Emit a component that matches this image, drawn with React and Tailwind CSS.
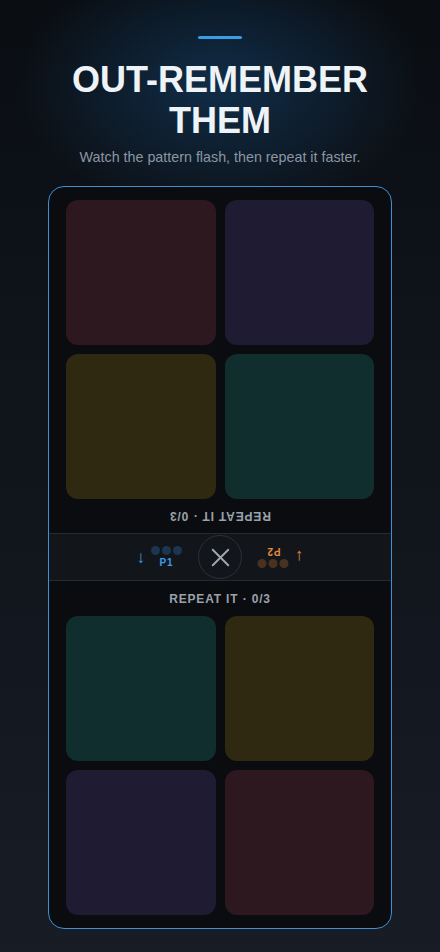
import React from 'react';
import { X } from 'lucide-react';

const TOP_PADS = ['bg-[#2e1820]', 'bg-[#1f1b33]', 'bg-[#2e2910]', 'bg-[#0f2e2d]'];
const BOTTOM_PADS = ['bg-[#0f2e2d]', 'bg-[#2e2910]', 'bg-[#1f1b33]', 'bg-[#2e1820]'];

function PadGrid({ pads }) {
  return (
    <div className="grid grid-cols-2 gap-[9px]">
      {pads.map((c, i) => (
        <div key={i} className={`h-[145px] rounded-[12px] ${c}`} />
      ))}
    </div>
  );
}

function Status({ flipped }) {
  return (
    <div
      className={`flex items-center justify-center text-[12px] font-bold tracking-[0.07em] text-[#9aa2ac] ${
        flipped ? 'h-[34px] rotate-180' : 'h-[35px]'
      }`}
    >
      REPEAT IT · 0/3
    </div>
  );
}

// one player's score block; the other side is the same thing turned over
function Player({ label, arrow, dot, flipped }) {
  return (
    <div className={`flex items-center gap-[6px] ${flipped ? 'rotate-180' : ''}`}>
      <span className={`text-[17px] font-bold leading-none ${arrow}`}>↓</span>
      <div className="flex flex-col items-center gap-[3px]">
        <div className="flex gap-[2px]">
          <span className={`w-[9px] h-[9px] rounded-full ${dot}`} />
          <span className={`w-[9px] h-[9px] rounded-full ${dot}`} />
          <span className={`w-[9px] h-[9px] rounded-full ${dot}`} />
        </div>
        <span className={`text-[10px] font-bold tracking-[0.08em] leading-none ${arrow}`}>{label}</span>
      </div>
    </div>
  );
}

export default function App() {
  return (
    <div
      className="min-h-[952px] w-[440px] flex flex-col items-center bg-[radial-gradient(ellipse_200px_130px_at_50%_85px,rgba(20,70,115,0.55),transparent),linear-gradient(180deg,#0a0e13_0%,#10151c_45%,#171c25_100%)]"
      style={{ fontFamily: '"Liberation Sans", Arial, sans-serif' }}
    >
      <div className="mt-9 w-11 h-[3px] rounded-full bg-[#3a9be6]" />
      <h1 className="mt-[20px] text-center text-[36px] leading-[41px] font-bold text-[#eef3f8]">
        OUT-REMEMBER
        <br />
        THEM
      </h1>
      <p className="mt-[6px] text-[14.3px] leading-[20px] text-[#8c96a3]">
        Watch the pattern flash, then repeat it faster.
      </p>

      <div className="mt-[19px] w-[344px] rounded-[16px] border border-[#3f8fd2] bg-[#0a0c10] overflow-hidden flex flex-col">
        <div className="px-[17px] pt-[13px]">
          <PadGrid pads={TOP_PADS} />
        </div>
        <Status flipped />

        <div className="h-[48px] flex items-center justify-center gap-[16px] bg-[#12161b] border-y border-[#262b33]">
          <Player label="P1" arrow="text-[#3a9be6]" dot="bg-[#1c3552]" />
          <button className="w-[44px] h-[44px] rounded-full border border-[#2c3138] flex items-center justify-center">
            <X className="w-[31px] h-[31px] text-[#a0a6ad]" strokeWidth={1.5} />
          </button>
          <Player label="P2" arrow="text-[#e58a3c]" dot="bg-[#4a3220]" flipped />
        </div>

        <Status />
        <div className="px-[17px] pb-[13px]">
          <PadGrid pads={BOTTOM_PADS} />
        </div>
      </div>
    </div>
  );
}
